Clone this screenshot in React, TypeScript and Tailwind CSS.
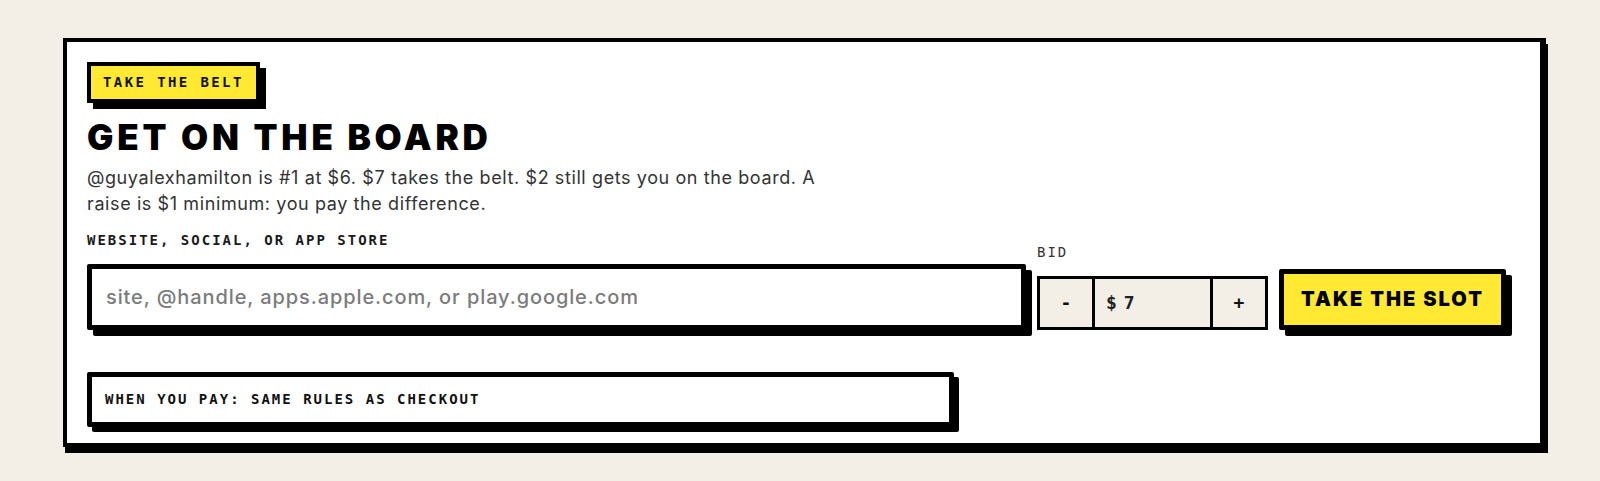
import React from "react";

const mono = "font-['DejaVu_Sans_Mono','Liberation_Mono',monospace]";
const sans = "font-['Inter','Noto_Sans',sans-serif]";

export default function App() {
  return (
    <div className="min-h-[481px] w-full bg-[#f3efe6] pl-[63px] pr-[54px] pt-[38px] pb-[27px]">
      <div className="border-4 border-r-[6px] border-black bg-white shadow-[2px_6px_0_#000] px-5 pt-5 pb-4">
        {/* badge */}
        <div className="flex">
          <div
            className={`${mono} flex h-[41px] items-center border-4 border-black bg-[#ffe933] px-3 text-[14px] font-bold tracking-[2.4px] text-[#111] shadow-[6px_6px_0_#000]`}
          >
            TAKE THE BELT
          </div>
        </div>

        <h2
          className={`${sans} mt-[17px] text-[35px] font-black leading-[35px] tracking-[3.8px] text-black`}
        >
          GET ON THE BOARD
        </h2>

        <p
          className={`${sans} mt-[10px] max-w-[745px] text-[18px] leading-[25.5px] tracking-[0.6px] text-[#333]`}
        >
          @guyalexhamilton is #1 at $6. $7 takes the belt. $2 still gets you on
          the board. A raise is $1 minimum: you pay the difference.
        </p>

        <div className="mt-[16px] flex items-end gap-[11px] pr-[14px]">
          <div className="flex flex-1 flex-col">
            <label
              className={`${mono} text-[14px] font-bold leading-[17.5px] tracking-[2px] text-[#1a1a1a]`}
            >
              WEBSITE, SOCIAL, OR APP STORE
            </label>
            <input
              type="text"
              placeholder="site, @handle, apps.apple.com, or play.google.com"
              className={`${sans} mt-[14px] h-[66px] w-full rounded-[2px] border-[5px] border-black bg-white px-[14px] text-[20px] font-medium tracking-[0.9px] text-[#222] shadow-[6px_6px_0_#000] outline-none placeholder:text-[#7b7b7b]`}
            />
          </div>

          <div className="flex w-[231px] flex-col">
            <span
              className={`${mono} text-[14px] leading-[17.5px] tracking-[2px] text-[#333]`}
            >
              BID
            </span>
            <div className="mt-[14px] flex h-[54px] border-[3px] border-black bg-[#f3efe6]">
              <button
                className={`${mono} flex w-[52px] items-center justify-center text-[18px] font-bold text-[#111]`}
              >
                -
              </button>
              <div
                className={`${mono} flex flex-1 items-center border-x-[3px] border-black pl-[11px] text-[18px] font-bold text-[#222]`}
              >
                <span>$</span>
                <span className="ml-[7px]">7</span>
              </div>
              <button
                className={`${mono} flex w-[52px] items-center justify-center text-[18px] font-bold text-[#111]`}
              >
                +
              </button>
            </div>
          </div>

          <button
            className={`${sans} flex h-[61px] w-[227px] items-center justify-center rounded-[2px] border-[5px] border-black bg-[#ffe933] text-[20px] font-black tracking-[2px] text-black shadow-[6px_6px_0_#000]`}
          >
            TAKE THE SLOT
          </button>
        </div>

        <div
          className={`${mono} mt-[42px] flex h-[55px] w-[867px] items-center rounded-[2px] border-[5px] border-black bg-white px-[13px] text-[14px] font-bold tracking-[2px] text-[#111] shadow-[5px_5px_0_#000]`}
        >
          WHEN YOU PAY: SAME RULES AS CHECKOUT
        </div>
      </div>
    </div>
  );
}
